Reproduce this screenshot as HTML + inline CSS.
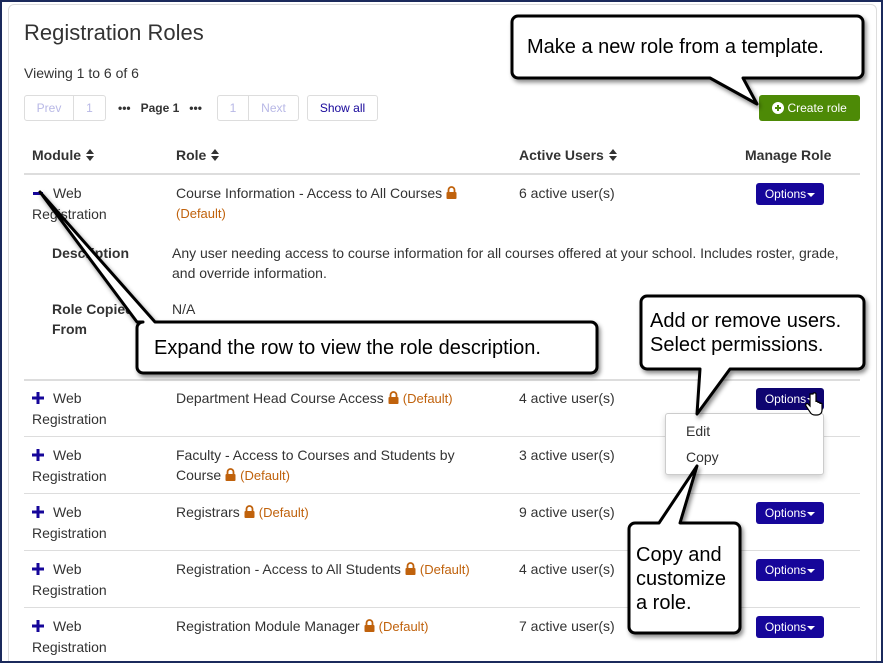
<!DOCTYPE html>
<html><head><meta charset="utf-8"><style>
*{box-sizing:border-box;margin:0;padding:0}
html,body{width:883px;height:663px;overflow:hidden}
body{background:#fff;font-family:"Liberation Sans",Arial,sans-serif;color:#333;font-size:14px;position:relative}
.frame{position:absolute;left:0;top:0;width:883px;height:663px;border:2px solid #1b2a5c;z-index:5;pointer-events:none}
.panel{position:absolute;left:8px;top:4px;width:869px;height:670px;border:1px solid #ddd;border-radius:6px}
.a{position:absolute;white-space:nowrap;line-height:20px}
.b{font-weight:bold}
.def{color:#c0620c;font-size:13px}
.hr{position:absolute;left:24px;width:836px;height:2px;background:#ddd}
.hr1{height:1px}
.opt{position:absolute;left:756px;width:68px;height:22px;background:#16069a;color:#fff;border-radius:3px;font-size:12px;line-height:22px;text-align:center}
.opt:after{content:"";display:inline-block;border-left:4px solid transparent;border-right:4px solid transparent;border-top:4px solid #fff;vertical-align:middle;margin-left:1px}
.pg{position:absolute;top:95px;height:26px;border:1px solid #ddd;font-size:12px;line-height:24px;text-align:center;color:#b8b8e6}
.ic{display:inline-block;width:21px;vertical-align:-1px}
.lock{display:inline-block;width:11px;height:13px;vertical-align:-1px;margin:0 4px}
.ci{font-size:20px;color:#000;position:absolute;line-height:24px}
.srt{display:inline-block;width:8px;height:12px;margin-left:5px;vertical-align:-1px}
</style></head><body>
<div class="frame"></div>
<div class="panel"></div>

<div class="a" style="left:24px;top:19px;font-size:22px;line-height:28px;color:#333">Registration Roles</div>
<div class="a" style="left:24px;top:63px">Viewing 1 to 6 of 6</div>

<div class="pg" style="left:24px;width:50px;border-radius:3px 0 0 3px">Prev</div>
<div class="pg" style="left:73px;width:33px;border-radius:0 3px 3px 0">1</div>
<div class="a" style="left:118px;top:98px;font-size:12px;font-weight:bold;color:#333">•••&nbsp;&nbsp; Page 1 &nbsp;&nbsp;•••</div>
<div class="pg" style="left:217px;width:32px;border-radius:3px 0 0 3px">1</div>
<div class="pg" style="left:248px;width:51px;border-radius:0 3px 3px 0">Next</div>
<div class="pg" style="left:307px;width:71px;border-radius:3px;color:#16069a">Show all</div>

<div style="position:absolute;left:759px;top:95px;width:101px;height:26px;background:#4d8a06;border-radius:3px;color:#fff;font-size:12px;line-height:26px;text-align:center">
<svg width="12" height="12" style="vertical-align:-2px" viewBox="0 0 12 12"><circle cx="6" cy="6" r="6" fill="#fff"/><path d="M6 3v6M3 6h6" stroke="#4d8a06" stroke-width="2"/></svg> Create role</div>

<div class="a b" style="left:32px;top:145px">Module<svg class="srt" viewBox="0 0 8 12"><path d="M0 5L4 0L8 5zM0 7L4 12L8 7z" fill="#333"/></svg></div>
<div class="a b" style="left:176px;top:145px">Role<svg class="srt" viewBox="0 0 8 12"><path d="M0 5L4 0L8 5zM0 7L4 12L8 7z" fill="#333"/></svg></div>
<div class="a b" style="left:519px;top:145px">Active Users<svg class="srt" viewBox="0 0 8 12"><path d="M0 5L4 0L8 5zM0 7L4 12L8 7z" fill="#333"/></svg></div>
<div class="a b" style="left:745px;top:145px">Manage Role</div>
<div class="hr" style="top:173px"></div>

<!-- row 1 -->
<div class="a" style="left:32px;top:183px"><span class="ic"><svg width="12" height="12" viewBox="0 0 12 12"><rect x="1" y="5" width="10" height="3" fill="#16069a"/></svg></span>Web<br>Registration</div>
<div class="a" style="left:176px;top:183px">Course Information - Access to All Courses<svg class="lock" viewBox="0 0 11 13"><path d="M2.5 6V4a3 3 0 016 0v2" stroke="#c0620c" stroke-width="1.8" fill="none"/><rect x="0.5" y="6" width="10" height="7" rx="1" fill="#c0620c"/></svg><br><span class="def">(Default)</span></div>
<div class="a" style="left:519px;top:183px">6 active user(s)</div>
<div class="opt" style="top:183px">Options</div>

<div class="a b" style="left:52px;top:243px">Description</div>
<div class="a" style="left:172px;top:243px;white-space:normal;width:680px">Any user needing access to course information for all courses offered at your school. Includes roster, grade, and override information.</div>
<div class="a b" style="left:52px;top:299px">Role Copied<br>From</div>
<div class="a" style="left:172px;top:299px">N/A</div>
<div class="hr" style="top:379px"></div>

<!-- rows -->
<div class="a" style="left:32px;top:388px"><span class="ic"><svg width="12" height="12" viewBox="0 0 12 12"><path d="M0 4.5h12v3H0zM4.5 0h3v12h-3z" fill="#16069a"/></svg></span>Web<br>Registration</div>
<div class="a" style="left:176px;top:388px">Department Head Course Access<svg class="lock" viewBox="0 0 11 13"><path d="M2.5 6V4a3 3 0 016 0v2" stroke="#c0620c" stroke-width="1.8" fill="none"/><rect x="0.5" y="6" width="10" height="7" rx="1" fill="#c0620c"/></svg><span class="def">(Default)</span></div>
<div class="a" style="left:519px;top:388px">4 active user(s)</div>
<div class="opt" style="top:388px;background:#0e0470">Options</div>
<div class="hr hr1" style="top:436px"></div>

<div class="a" style="left:32px;top:445px"><span class="ic"><svg width="12" height="12" viewBox="0 0 12 12"><path d="M0 4.5h12v3H0zM4.5 0h3v12h-3z" fill="#16069a"/></svg></span>Web<br>Registration</div>
<div class="a" style="left:176px;top:445px">Faculty - Access to Courses and Students by<br>Course<svg class="lock" viewBox="0 0 11 13"><path d="M2.5 6V4a3 3 0 016 0v2" stroke="#c0620c" stroke-width="1.8" fill="none"/><rect x="0.5" y="6" width="10" height="7" rx="1" fill="#c0620c"/></svg><span class="def">(Default)</span></div>
<div class="a" style="left:519px;top:445px">3 active user(s)</div>
<div class="opt" style="top:445px">Options</div>
<div class="hr hr1" style="top:493px"></div>

<div class="a" style="left:32px;top:502px"><span class="ic"><svg width="12" height="12" viewBox="0 0 12 12"><path d="M0 4.5h12v3H0zM4.5 0h3v12h-3z" fill="#16069a"/></svg></span>Web<br>Registration</div>
<div class="a" style="left:176px;top:502px">Registrars<svg class="lock" viewBox="0 0 11 13"><path d="M2.5 6V4a3 3 0 016 0v2" stroke="#c0620c" stroke-width="1.8" fill="none"/><rect x="0.5" y="6" width="10" height="7" rx="1" fill="#c0620c"/></svg><span class="def">(Default)</span></div>
<div class="a" style="left:519px;top:502px">9 active user(s)</div>
<div class="opt" style="top:502px">Options</div>
<div class="hr hr1" style="top:550px"></div>

<div class="a" style="left:32px;top:559px"><span class="ic"><svg width="12" height="12" viewBox="0 0 12 12"><path d="M0 4.5h12v3H0zM4.5 0h3v12h-3z" fill="#16069a"/></svg></span>Web<br>Registration</div>
<div class="a" style="left:176px;top:559px">Registration - Access to All Students<svg class="lock" viewBox="0 0 11 13"><path d="M2.5 6V4a3 3 0 016 0v2" stroke="#c0620c" stroke-width="1.8" fill="none"/><rect x="0.5" y="6" width="10" height="7" rx="1" fill="#c0620c"/></svg><span class="def">(Default)</span></div>
<div class="a" style="left:519px;top:559px">4 active user(s)</div>
<div class="opt" style="top:559px">Options</div>
<div class="hr hr1" style="top:607px"></div>

<div class="a" style="left:32px;top:616px"><span class="ic"><svg width="12" height="12" viewBox="0 0 12 12"><path d="M0 4.5h12v3H0zM4.5 0h3v12h-3z" fill="#16069a"/></svg></span>Web<br>Registration</div>
<div class="a" style="left:176px;top:616px">Registration Module Manager<svg class="lock" viewBox="0 0 11 13"><path d="M2.5 6V4a3 3 0 016 0v2" stroke="#c0620c" stroke-width="1.8" fill="none"/><rect x="0.5" y="6" width="10" height="7" rx="1" fill="#c0620c"/></svg><span class="def">(Default)</span></div>
<div class="a" style="left:519px;top:616px">7 active user(s)</div>
<div class="opt" style="top:616px">Options</div>

<!-- dropdown -->
<div style="position:absolute;left:665px;top:413px;width:159px;height:62px;background:#fff;border:1px solid #ccc;border-radius:3px;box-shadow:0 3px 6px rgba(0,0,0,.18)"></div>
<div class="a" style="left:686px;top:421px">Edit</div>
<div class="a" style="left:686px;top:447px">Copy</div>

<!-- cursor -->
<svg style="position:absolute;left:805px;top:392px" width="18" height="26" viewBox="0 0 18 26"><path d="M5 2v12l-2-2c-1-1-3 0-2 2l4 6c1 2 3 3 5 3h2c3 0 5-2 5-5v-6c0-1-2-1-2 0v-1c0-1-2-1-2 0v-1c0-1-2-1-2 0V2c0-1.5-3-1.5-3 0z" fill="#fff" stroke="#000" stroke-width="1.2"/></svg>

<!-- callouts -->
<svg style="position:absolute;left:0;top:0" width="883" height="663" viewBox="0 0 883 663">
<defs><filter id="sh" x="-10%" y="-10%" width="130%" height="140%"><feDropShadow dx="2" dy="3" stdDeviation="2" flood-color="#000" flood-opacity=".45"/></filter></defs>
<g fill="#fff" stroke="#000" stroke-width="3" stroke-linejoin="round" filter="url(#sh)">
<path d="M518 16H857a6 6 0 016 6V72a6 6 0 01-6 6H743L757 104L710 78H518a6 6 0 01-6-6V22a6 6 0 016-6z"/>
<path d="M143 322H137L40 192L155 322H591a6 6 0 016 6V367a6 6 0 01-6 6H143a6 6 0 01-6-6V328a6 6 0 016-6z"/>
<path d="M647 296H858a6 6 0 016 6V363a6 6 0 01-6 6H730L697 414L700 369H647a6 6 0 01-6-6V302a6 6 0 016-6z"/>
<path d="M635 523H659L697 466L680 523H734a6 6 0 016 6V627a6 6 0 01-6 6H635a6 6 0 01-6-6V529a6 6 0 016-6z"/>
</g>
</svg>
<div class="ci" style="left:527px;top:35px">Make a new role from a template.</div>
<div class="ci" style="left:154px;top:336px">Expand the row to view the role description.</div>
<div class="ci" style="left:650px;top:309px">Add or remove users.<br>Select permissions.</div>
<div class="ci" style="left:636px;top:543px">Copy and<br>customize<br>a role.</div>
</body></html>
